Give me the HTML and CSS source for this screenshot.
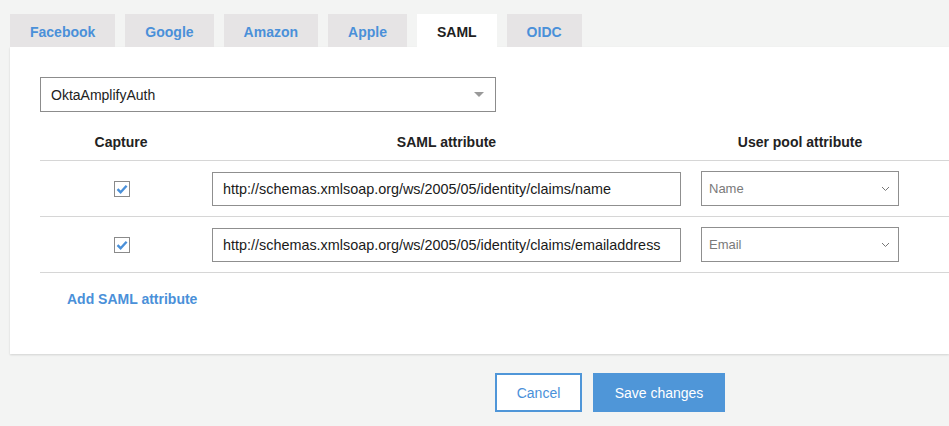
FILE: index.html
```html
<!DOCTYPE html>
<html lang="en">
<head>
<meta charset="utf-8">
<title>SAML attribute mapping</title>
<link rel="stylesheet" href="styles.css">
</head>
<body>
<div class="page">
  <nav class="tabs">
    <a class="tab">Facebook</a>
    <a class="tab">Google</a>
    <a class="tab">Amazon</a>
    <a class="tab">Apple</a>
    <a class="tab tab-active">SAML</a>
    <a class="tab">OIDC</a>
  </nav>
  <section class="panel">
    <div class="provider-select">
      <span class="provider-name">OktaAmplifyAuth</span>
      <span class="caret"></span>
    </div>
    <div class="table">
      <div class="row row-head">
        <div class="cell cell-capture">Capture</div>
        <div class="cell cell-saml">SAML attribute</div>
        <div class="cell cell-pool">User pool attribute</div>
      </div>
      <div class="row">
        <div class="cell cell-capture"><span class="checkbox"><svg width="12" height="10" viewBox="0 0 12 10"><path d="M1.5 5.2 L4.6 8.2 L10.6 1.8" fill="none" stroke="#4a90d9" stroke-width="2.4"/></svg></span></div>
        <div class="cell cell-saml"><div class="text-input">http://schemas.xmlsoap.org/ws/2005/05/identity/claims/name</div></div>
        <div class="cell cell-pool"><div class="pool-select"><span>Name</span><svg width="9" height="6" viewBox="0 0 9 6"><path d="M1 1 L4.5 4.5 L8 1" fill="none" stroke="#777" stroke-width="1"/></svg></div></div>
      </div>
      <div class="row">
        <div class="cell cell-capture"><span class="checkbox"><svg width="12" height="10" viewBox="0 0 12 10"><path d="M1.5 5.2 L4.6 8.2 L10.6 1.8" fill="none" stroke="#4a90d9" stroke-width="2.4"/></svg></span></div>
        <div class="cell cell-saml"><div class="text-input">http://schemas.xmlsoap.org/ws/2005/05/identity/claims/emailaddress</div></div>
        <div class="cell cell-pool"><div class="pool-select"><span>Email</span><svg width="9" height="6" viewBox="0 0 9 6"><path d="M1 1 L4.5 4.5 L8 1" fill="none" stroke="#777" stroke-width="1"/></svg></div></div>
      </div>
    </div>
    <a class="add-link">Add SAML attribute</a>
  </section>
  <div class="actions">
    <button class="btn btn-cancel">Cancel</button>
    <button class="btn btn-save">Save changes</button>
  </div>
</div>
</body>
</html>
```

FILE: styles.css
```css
html, body {
  margin: 0;
  padding: 0;
}
body {
  background: #f3f4f3;
  font-family: "Liberation Sans", Arial, sans-serif;
  color: #222;
  overflow: hidden;
  width: 949px;
  height: 426px;
}
.page {
  padding: 14px 0 0 10px;
}
.tabs {
  display: flex;
  gap: 10px;
  height: 33px;
}
.tab {
  display: flex;
  align-items: center;
  padding: 2px 20px 0;
  background: #e6e4e5;
  color: #4a90d9;
  font-weight: bold;
  font-size: 14px;
}
.tab-active {
  background: #fff;
  color: #1f1f1f;
}
.panel {
  background: #fff;
  box-shadow: 0 1px 2px rgba(0,0,0,0.14);
  padding: 30px 0 47px 30px;
}
.provider-select {
  box-sizing: border-box;
  width: 456px;
  height: 35px;
  border: 1px solid #8c8c8c;
  display: flex;
  align-items: center;
  justify-content: space-between;
  padding: 0 11px 0 10px;
  font-size: 14px;
  color: #222;
}
.caret {
  width: 0;
  height: 0;
  border-left: 5px solid transparent;
  border-right: 5px solid transparent;
  border-top: 5px solid #999;
}
.table {
  margin-top: 12px;
}
.row {
  display: grid;
  grid-template-columns: 162px 489px 218px 1fr;
  height: 55px;
  align-items: center;
  border-bottom: 1px solid #d6d6d6;
}
.row-head {
  height: 36px;
  font-weight: bold;
  font-size: 14px;
  color: #222;
}
.cell {
  padding: 0 10px;
  text-align: center;
}
.cell-capture {
  padding: 0;
  display: flex;
  justify-content: center;
  padding-left: 2px;
}
.row-head .cell-capture {
  padding-left: 0;
}
.checkbox {
  box-sizing: border-box;
  width: 16px;
  height: 16px;
  border: 1px solid #8a8a8a;
  background: #fff;
  display: flex;
  align-items: center;
  justify-content: center;
  margin-top: 1px;
}
.text-input {
  box-sizing: border-box;
  height: 34px;
  border: 1px solid #8f8f8f;
  display: flex;
  align-items: center;
  padding: 0 10px;
  font-size: 14.4px;
  color: #1a1a1a;
  text-align: left;
  white-space: nowrap;
  overflow: hidden;
}
.pool-select {
  box-sizing: border-box;
  height: 35px;
  border: 1px solid #8f8f8f;
  display: flex;
  align-items: center;
  justify-content: space-between;
  padding: 0 8px 0 7px;
  font-size: 13px;
  color: #7a7a7a;
}
.add-link {
  display: block;
  margin: 18px 0 0 27px;
  font-size: 14px;
  font-weight: bold;
  color: #4a90d9;
}
.actions {
  display: flex;
  gap: 11px;
  margin-top: 19px;
  padding-left: 485px;
}
.btn {
  box-sizing: border-box;
  height: 39px;
  font-family: "Liberation Sans", Arial, sans-serif;
  font-size: 14px;
  border: 2px solid #4f96d8;
  cursor: pointer;
}
.btn-cancel {
  width: 87px;
  background: #fff;
  color: #4a90d9;
}
.btn-save {
  width: 132px;
  background: #4f96d8;
  color: #fff;
}
```
